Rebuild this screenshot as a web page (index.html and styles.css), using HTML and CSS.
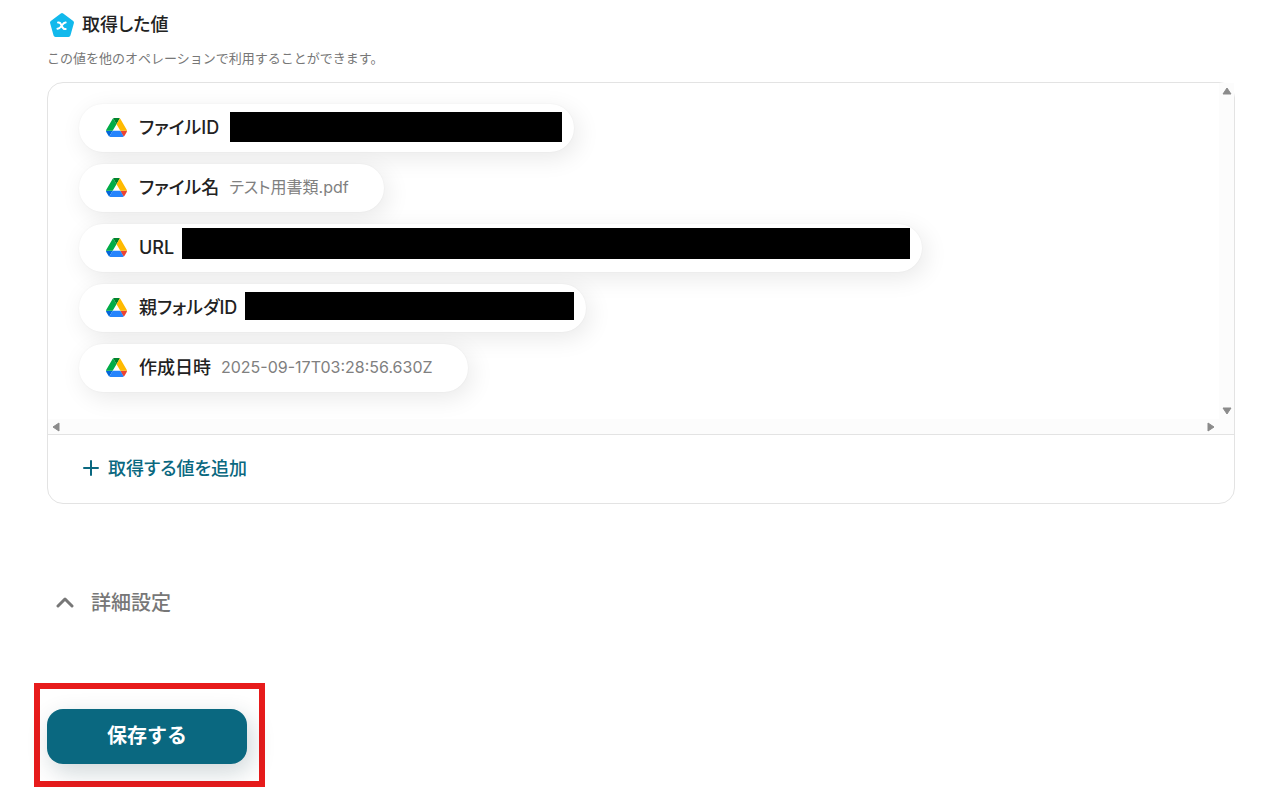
FILE: index.html
```html
<!DOCTYPE html>
<html lang="ja">
<head>
  <meta charset="UTF-8" />
  <meta name="viewport" content="width=device-width, initial-scale=1.0" />
  <title>取得した値</title>
  <link rel="stylesheet" href="styles.css">
</head>
<body>
  <!-- Google Drive icon, shared by all chips -->
  <svg class="defs" width="0" height="0" aria-hidden="true">
    <symbol id="drive" viewBox="0 0 87.3 78">
      <path fill="#0066da" d="m6.6 66.85 3.85 6.65c.8 1.4 1.95 2.5 3.3 3.3l13.75-23.8h-27.5c0 1.55.4 3.1 1.2 4.5z"/>
      <path fill="#00ac47" d="m43.65 25-13.75-23.8c-1.35.8-2.5 1.9-3.3 3.3l-25.4 44a9.06 9.06 0 0 0 -1.2 4.5h27.5z"/>
      <path fill="#ea4335" d="m73.55 76.8c1.35-.8 2.5-1.9 3.3-3.3l1.6-2.75 7.65-13.25c.8-1.4 1.2-2.95 1.2-4.5h-27.502l5.852 11.5z"/>
      <path fill="#00832d" d="m43.65 25 13.75-23.8c-1.35-.8-2.9-1.2-4.5-1.2h-18.5c-1.6 0-3.15.45-4.5 1.2z"/>
      <path fill="#2684fc" d="m59.8 53h-32.3l-13.75 23.8c1.35.8 2.9 1.2 4.5 1.2h50.8c1.6 0 3.15-.45 4.5-1.2z"/>
      <path fill="#ffba00" d="m73.4 26.5-12.7-22c-.8-1.4-1.95-2.5-3.3-3.3l-13.75 23.8 16.15 28h27.45c0-1.55-.4-3.1-1.2-4.5z"/>
    </symbol>
  </svg>

  <main class="page">
    <header class="section-header">
      <h1>
        <svg class="output-icon" viewBox="0 0 26 26" aria-hidden="true">
          <path d="M13 3 23 10.5 19.5 23h-13L3 10.5z" fill="#12b9ec" stroke="#12b9ec" stroke-width="4" stroke-linejoin="round"/>
          <path d="M9 10.500c1.800-.4 2.500.2 3.500 2.800s1.800 4.500 4.200 3.700M16.700 10.500c-1.500-.2-2.400.8-3.900 3s-2.400 3.500-4.400 3.200" fill="none" stroke="#fff" stroke-width="1.900" stroke-linecap="round"/>
        </svg>
        取得した値
      </h1>
      <p>この値を他のオペレーションで利用することができます。</p>
    </header>

    <section class="panel">
      <div class="scroll-box">
        <ul class="chips">
          <li class="chip chip-masked">
            <svg class="drive"><use href="#drive"/></svg>
            <span class="name">ファイルID</span>
            <span class="mask mask-file"></span>
          </li>
          <li class="chip">
            <svg class="drive"><use href="#drive"/></svg>
            <span class="name">ファイル名</span>
            <span class="value">テスト用書類.pdf</span>
          </li>
          <li class="chip chip-masked">
            <svg class="drive"><use href="#drive"/></svg>
            <span class="name">URL</span>
            <span class="mask mask-url"></span>
          </li>
          <li class="chip chip-masked">
            <svg class="drive"><use href="#drive"/></svg>
            <span class="name">親フォルダID</span>
            <span class="mask mask-folder"></span>
          </li>
          <li class="chip">
            <svg class="drive"><use href="#drive"/></svg>
            <span class="name">作成日時</span>
            <span class="value">2025-09-17T03:28:56.630Z</span>
          </li>
        </ul>
        <div class="track track-y">
          <svg viewBox="0 0 10 8"><path d="M5 1 9 7H1z"/></svg>
          <svg viewBox="0 0 10 8"><path d="M5 7 9 1H1z"/></svg>
        </div>
        <div class="track track-x">
          <svg viewBox="0 0 8 10"><path d="M1 5 7 1v8z"/></svg>
          <svg viewBox="0 0 8 10"><path d="M7 5 1 1v8z"/></svg>
        </div>
      </div>
      <div class="panel-footer">
        <button type="button" class="add-btn">
          <svg viewBox="0 0 18 18" aria-hidden="true"><path d="M9 1v14M2 8h14"/></svg>
          取得する値を追加
        </button>
      </div>
    </section>

    <button type="button" class="detail-btn" aria-expanded="false">
      <svg viewBox="0 0 18 12" aria-hidden="true"><path d="M2 9 9 2l7 7"/></svg>
      詳細設定
    </button>

    <div class="save-frame">
      <button type="submit" class="save-btn">保存する</button>
    </div>
  </main>
</body>
</html>
```

FILE: styles.css
```css
* { box-sizing: border-box; }
body {
  margin: 0;
  background: #fff;
  color: #222;
  font-family: Inter, "Noto Sans CJK JP", sans-serif;
}
button {
  border: none; background: none; padding: 0;
  font-family: inherit; cursor: pointer;
}
h1, .chip, .add-btn { font-feature-settings: "palt"; }
.defs { position: absolute; }
.page { padding: 10px 31px 0 47px; }

.section-header h1 {
  display: flex; align-items: center; gap: 7px;
  margin: 0; font-size: 18px; line-height: 30px; font-weight: 500;
}
.output-icon { width: 26px; height: 26px; margin-left: 2px; }
.section-header p {
  margin: 8px 0 14px;
  font-size: 13px; line-height: 20px; color: #777;
}

.panel { border: 1px solid #e3e3e3; border-radius: 16px; }
.scroll-box {
  display: grid;
  grid-template-columns: 1fr 15px;
  grid-template-rows: auto 15px;
  border-bottom: 1px solid #e3e3e3;
}
.chips {
  display: flex; flex-direction: column; align-items: flex-start; gap: 12px;
  margin: 0; padding: 21px 31px 27px; list-style: none;
}
.chip {
  display: flex; align-items: center;
  height: 48px; padding: 0 35px 2px 27px;
  background: #fff; border-radius: 24px;
  box-shadow: 4px 6px 24px rgba(0,0,0,0.09), 0 0 2px rgba(0,0,0,0.05);
}
.chip-masked { padding-right: 12px; }
.drive { width: 21px; height: 19px; margin-right: 12px; }
.name { padding-top: 2px; font-size: 18px; line-height: 24px; font-weight: 500; white-space: nowrap; }
.value { margin-left: 10px; font-size: 16px; line-height: 24px; color: #808080; white-space: nowrap; }
.mask { align-self: flex-start; margin: 8px 0 0 8px; height: 30px; background: #000; }
.mask-file { width: 332px; margin-left: 11px; }
.mask-url { width: 728px; margin-top: 4px; height: 31px; }
.mask-folder { width: 329px; height: 28px; }

.track { display: flex; justify-content: space-between; align-items: center; background: #fcfcfc; }
.track svg { fill: #8b8b8b; stroke: #8b8b8b; stroke-width: 1; stroke-linejoin: round; }
.track-y { flex-direction: column; padding: 4px 0; }
.track-y svg { width: 10px; height: 8px; }
.track-x { grid-column: 1 / -1; padding: 0 19px 0 4px; }
.track-x svg { width: 8px; height: 10px; }

.panel-footer { padding: 18px 34px; }
.add-btn {
  display: flex; align-items: center; gap: 8px;
  font-size: 18px; line-height: 32px; font-weight: 500; color: #0a6880;
}
.add-btn svg { width: 18px; height: 18px; fill: none; stroke: currentColor; stroke-width: 2; stroke-linecap: round; }

.detail-btn {
  display: flex; align-items: center; gap: 17px;
  margin-top: 84px; padding-left: 9px;
  font-size: 20px; line-height: 30px; font-weight: 500; color: #777;
}
.detail-btn svg { width: 18px; height: 12px; fill: none; stroke: currentColor; stroke-width: 3; stroke-linecap: round; stroke-linejoin: round; }

.save-frame {
  width: fit-content;
  margin: 65px 0 0 -13px; padding: 20px 12px 17px 7px;
  border: 6px solid #e71b1b;
}
.save-btn {
  display: block; min-width: 200px; height: 55px; padding-bottom: 4px;
  background: #0a6880; color: #fff; border-radius: 16px;
  font-size: 20px; font-weight: 700;
  box-shadow: 4px 8px 24px rgba(10,50,60,0.2);
}
```
